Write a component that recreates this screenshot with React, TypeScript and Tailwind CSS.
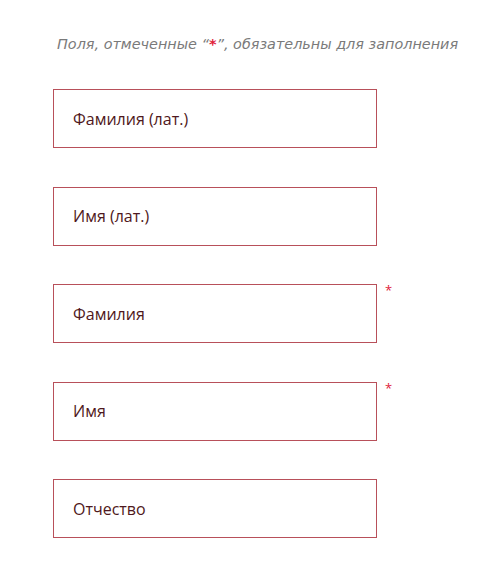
import React from "react";

const fields = [
  { label: "Фамилия (лат.)", required: false },
  { label: "Имя (лат.)", required: false },
  { label: "Фамилия", required: true },
  { label: "Имя", required: true },
  { label: "Отчество", required: false },
];

function App() {
  return (
    <div className="w-[480px] h-[580px] bg-white pt-[34px] pl-[53px] font-['Open_Sans',sans-serif]">
      <p className="ml-[4px] text-[14.4px] italic text-[#7a7a7a] leading-[20px] font-['DejaVu_Sans',sans-serif]">
        Поля, отмеченные “<span className="text-[#e0203a] not-italic font-bold">*</span>”, обязательны для заполнения
      </p>

      <div className="flex flex-col gap-[38.5px] mt-[35px]">
        {fields.map((f) => (
          <div key={f.label} className="flex items-start">
            <div className="w-[324px] h-[59px] border border-[#b8505a] flex items-center pl-[19px] text-[16px] text-[#4f1820]">
              {f.label}
            </div>
            {f.required && (
              <span className="ml-[8px] -mt-[3px] text-[13px] text-[#e0203a]">*</span>
            )}
          </div>
        ))}
      </div>
    </div>
  );
}

export default App;
